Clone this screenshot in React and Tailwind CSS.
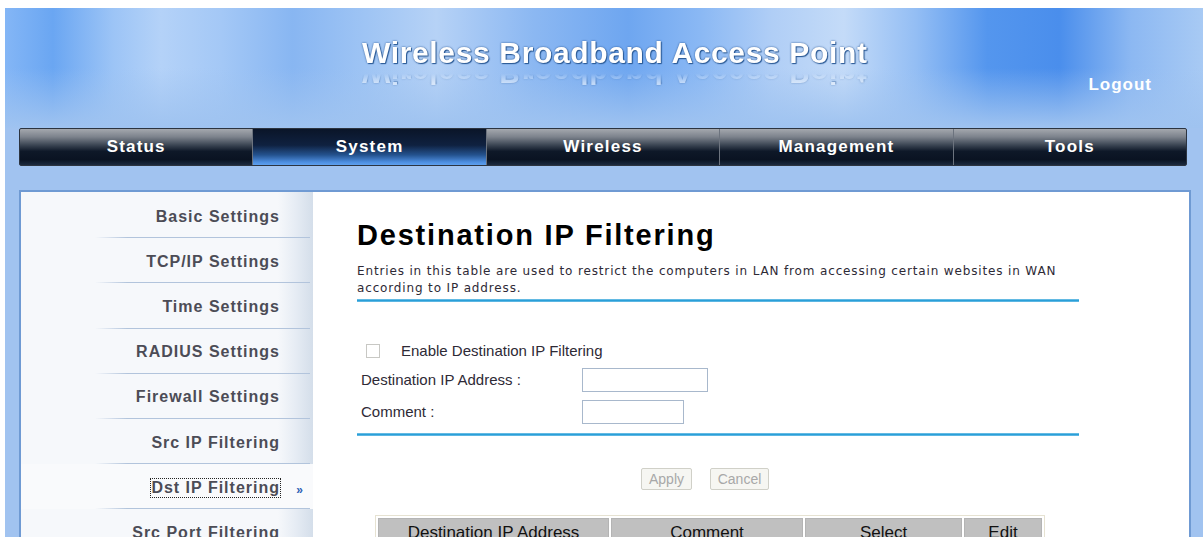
import React, { useState } from 'react';

const tabs = ['Status', 'System', 'Wireless', 'Management', 'Tools'];

const menuItems = [
  'Basic Settings',
  'TCP/IP Settings',
  'Time Settings',
  'RADIUS Settings',
  'Firewall Settings',
  'Src IP Filtering',
  'Dst IP Filtering',
  'Src Port Filtering',
];

const columns = [
  { label: 'Destination IP Address', width: 'w-[231px]' },
  { label: 'Comment', width: 'w-[192px]' },
  { label: 'Select', width: 'w-[157px]' },
  { label: 'Edit', width: 'w-[78px]' },
];

const Banner = () => (
  <div className="relative h-[120px] bg-[linear-gradient(180deg,rgba(159,195,240,0)_50%,#9fc3f0_100%),linear-gradient(90deg,#84b6f6_0%,#6aa6f2_4%,#9cc4f6_9%,#b4d2f8_13%,#a4c8f6_18%,#88b6f2_24%,#9ec4f4_30%,#b6d2f6_36%,#8cb8f2_44%,#6ea6f0_52%,#8ab8f4_58%,#b0cef6_64%,#c4dbf8_70%,#94bef4_76%,#5496ee_82%,#4a8eec_88%,#8cb8f2_94%,#a8caf4_100%)]">
    <h1 className="absolute left-[357px] top-[28px] font-['Liberation_Sans',Arial,sans-serif] text-[30px] font-bold leading-[34px] tracking-[0.65px] text-white [text-shadow:0_0_2px_#24508c,1px_1px_1px_#2a5a96] [-webkit-box-reflect:below_-14px_linear-gradient(to_bottom,rgba(255,255,255,0.5)_20%,transparent_48%)]">
      Wireless Broadband Access Point
    </h1>
    <a className="absolute right-[51px] top-[64px] font-['Liberation_Sans',Arial,sans-serif] text-[17px] font-bold tracking-[1px] text-white">
      Logout
    </a>
  </div>
);

const NavBar = ({ active }) => (
  <div className="ml-[14px] flex h-[38px] w-[1168px] overflow-hidden rounded-[2px] border border-[#2c3440] bg-[linear-gradient(180deg,#a4a8ae_0%,#7c828c_22%,#3a4452_45%,#0e1828_62%,#0a1322_85%,#1c2a3e_100%)]">
    {tabs.map((tab, i) => (
      <div
        key={tab}
        className={`flex flex-1 items-center justify-center font-['Liberation_Sans',Arial,sans-serif] text-[17px] font-bold tracking-[1.2px] text-white ${
          i > 0 ? 'border-l border-[#6c737e]' : ''
        } ${
          tab === active
            ? 'bg-[linear-gradient(180deg,#0a1528_0%,#0f2140_45%,#24528e_72%,#4d8ee0_92%,#5ea0ee_100%)]'
            : ''
        }`}
      >
        {tab}
      </div>
    ))}
  </div>
);

const SideMenu = ({ current }) => (
  <div className="w-[292px] shrink-0 pt-[1px] bg-[linear-gradient(90deg,#f6f8fb_0%,#f6f8fb_88%,#e6ecf4_94%,#d4deea_100%)]">
    {menuItems.map((item) => {
      const isCurrent = item === current;
      return (
        <div
          key={item}
          className={`relative flex h-[45.2px] items-center justify-end pr-[33px] ${
            isCurrent ? 'bg-[#f9fafc]' : ''
          }`}
        >
          <span
            className={`mt-[2px] font-['Liberation_Sans',Arial,sans-serif] text-[16px] font-bold leading-[18px] tracking-[1px] text-[#4c4c56] ${
              isCurrent ? 'outline-1 outline-dotted outline-[#222]' : ''
            }`}
          >
            {item}
          </span>
          {isCurrent && (
            <span className="absolute right-[10px] top-[17px] font-['Liberation_Sans',Arial,sans-serif] text-[12px] font-bold text-[#2d5fb4]">
              »
            </span>
          )}
          <div className="absolute bottom-0 left-[74px] right-[3px] h-px bg-[linear-gradient(90deg,rgba(168,188,214,0)_0%,#b2c4dc_15%,#b2c4dc_100%)]" />
        </div>
      );
    })}
  </div>
);

const BlueRule = () => (
  <div className="h-[3px] w-[722px] bg-[linear-gradient(180deg,#8ccdeb_0%,#2a9fd8_40%,#2a9fd8_70%,#9ad3ee_100%)]" />
);

const FilterForm = () => {
  const [enabled, setEnabled] = useState(false);
  const [ip, setIp] = useState('');
  const [comment, setComment] = useState('');

  return (
    <div className="flex-1 pl-[44px] pt-[26px]">
      <h2 className="font-['Liberation_Sans',Arial,sans-serif] text-[29px] font-bold leading-[34px] tracking-[1.8px] text-black">
        Destination IP Filtering
      </h2>
      <p className="mt-[11px] w-[722px] font-['DejaVu_Sans',Verdana,sans-serif] text-[12px] leading-[17px] tracking-[0.85px] text-[#2e2a36]">
        Entries in this table are used to restrict the computers in LAN from accessing certain websites in WAN according to IP address.
      </p>
      <div className="mt-[2px]">
        <BlueRule />
      </div>

      <div className="pt-[40px] font-['Liberation_Sans',Arial,sans-serif] text-[15px] text-[#2e2a36]">
        <label className="flex h-[18px] items-center">
          <input
            type="checkbox"
            checked={enabled}
            onChange={(e) => setEnabled(e.target.checked)}
            className="ml-[9px] h-[14px] w-[14px] appearance-none border border-[#c8c8c4] bg-white"
          />
          <span className="ml-[21px]">Enable Destination IP Filtering</span>
        </label>
        <div className="mt-[8px] flex h-[24px] items-center">
          <span className="w-[225px] pl-[4px]">Destination IP Address :</span>
          <input
            value={ip}
            onChange={(e) => setIp(e.target.value)}
            className="h-[24px] w-[126px] border border-[#a8b8cc] bg-white outline-none"
          />
        </div>
        <div className="mt-[8px] flex h-[24px] items-center">
          <span className="w-[225px] pl-[4px]">Comment :</span>
          <input
            value={comment}
            onChange={(e) => setComment(e.target.value)}
            className="h-[24px] w-[102px] border border-[#a8b8cc] bg-white outline-none"
          />
        </div>
      </div>

      <div className="mt-[9px]">
        <BlueRule />
      </div>

      <div className="mt-[32px] flex gap-[18px] pl-[284px]">
        <button
          disabled
          className="h-[22px] w-[51px] rounded-[2px] border border-[#d0d0c8] bg-[#f6f6f2] font-['Liberation_Sans',Arial,sans-serif] text-[14px] text-[#a8a8a8]"
        >
          Apply
        </button>
        <button
          disabled
          className="h-[22px] w-[59px] rounded-[2px] border border-[#d0d0c8] bg-[#f6f6f2] font-['Liberation_Sans',Arial,sans-serif] text-[14px] text-[#a8a8a8]"
        >
          Cancel
        </button>
      </div>

      <table className="ml-[18px] mt-[25px] border-separate border-spacing-[2px] border border-[#e6e2d2] font-['Liberation_Sans',Arial,sans-serif] text-[17px] text-[#111]">
        <thead>
          <tr>
            {columns.map((col) => (
              <th
                key={col.label}
                className={`${col.width} h-[28px] border border-[#b4b4b4] bg-[#c0c0c0] pt-[4px] align-top font-normal leading-[20px]`}
              >
                {col.label}
              </th>
            ))}
          </tr>
        </thead>
      </table>
    </div>
  );
};

export default function App() {
  return (
    <div className="h-[537px] w-[1203px] overflow-hidden bg-white pl-[5px] pt-[8px]">
      <div className="h-[529px] bg-[#a1c3f0]">
        <Banner />
        <NavBar active="System" />
        <div className="ml-[14px] mt-[24px] flex h-[400px] w-[1172px] border-l-2 border-r-2 border-t-2 border-[#6f9ad3] bg-white">
          <SideMenu current="Dst IP Filtering" />
          <FilterForm />
        </div>
      </div>
    </div>
  );
}
